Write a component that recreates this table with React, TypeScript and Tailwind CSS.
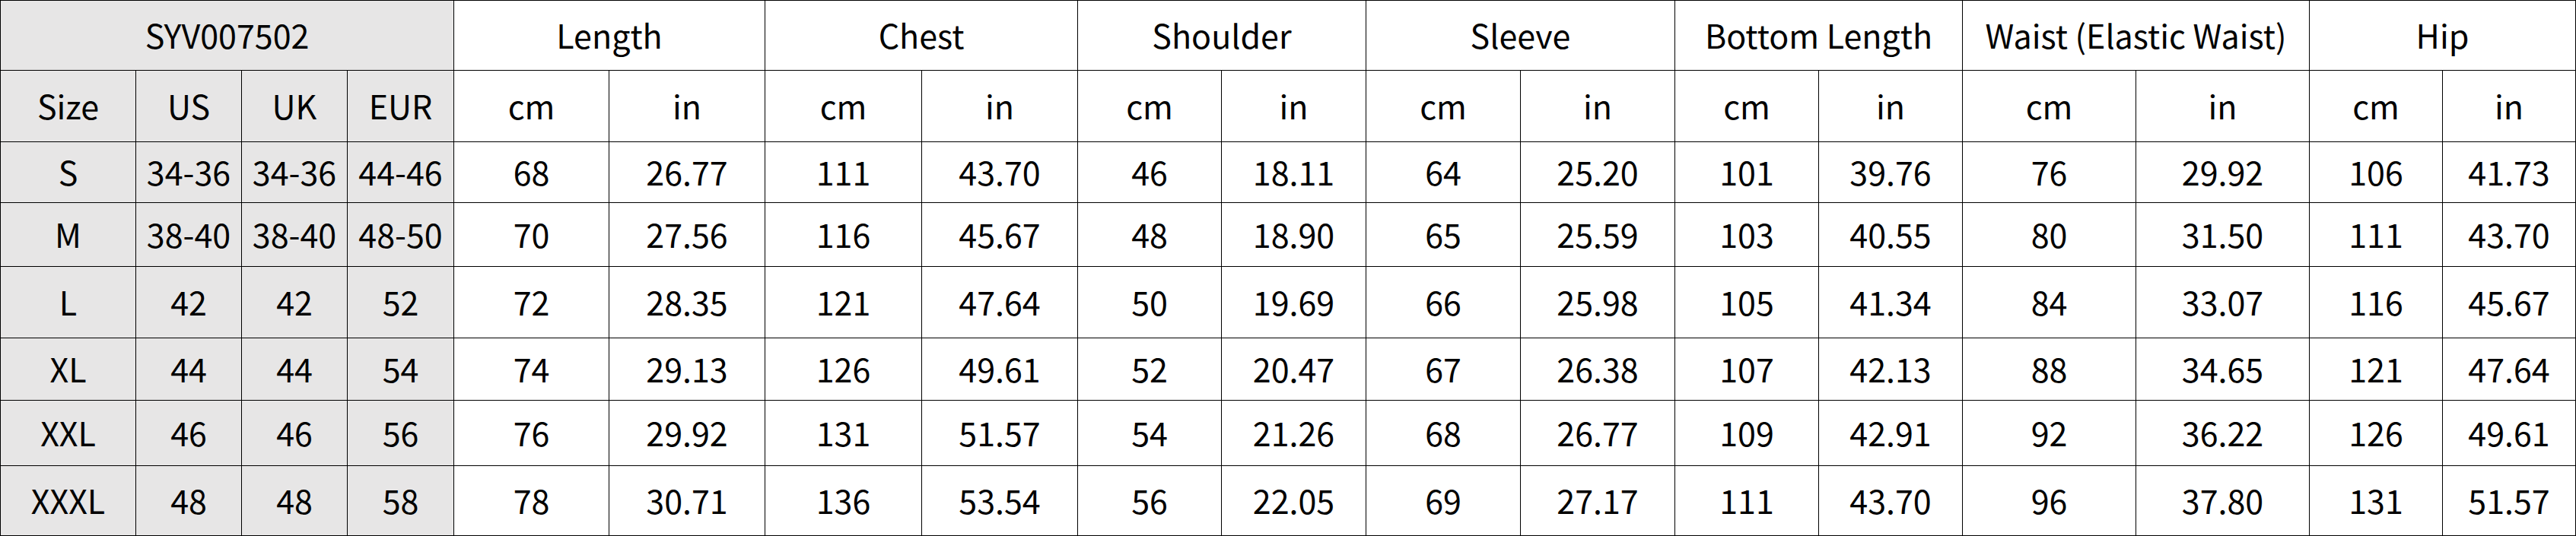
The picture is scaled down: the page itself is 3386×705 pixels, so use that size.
import * as React from "react"

const measures = ["Length", "Chest", "Shoulder", "Sleeve", "Bottom Length", "Waist (Elastic Waist)", "Hip"]

const rows: string[][] = [
  ["S", "34-36", "34-36", "44-46", "68", "26.77", "111", "43.70", "46", "18.11", "64", "25.20", "101", "39.76", "76", "29.92", "106", "41.73"],
  ["M", "38-40", "38-40", "48-50", "70", "27.56", "116", "45.67", "48", "18.90", "65", "25.59", "103", "40.55", "80", "31.50", "111", "43.70"],
  ["L", "42", "42", "52", "72", "28.35", "121", "47.64", "50", "19.69", "66", "25.98", "105", "41.34", "84", "33.07", "116", "45.67"],
  ["XL", "44", "44", "54", "74", "29.13", "126", "49.61", "52", "20.47", "67", "26.38", "107", "42.13", "88", "34.65", "121", "47.64"],
  ["XXL", "46", "46", "56", "76", "29.92", "131", "51.57", "54", "21.26", "68", "26.77", "109", "42.91", "92", "36.22", "126", "49.61"],
  ["XXXL", "48", "48", "58", "78", "30.71", "136", "53.54", "56", "22.05", "69", "27.17", "111", "43.70", "96", "37.80", "131", "51.57"],
]

const cell = "flex items-center justify-center pb-[3px] bg-white"
const gray = "flex items-center justify-center pb-[3px] bg-[#e7e6e6]"

export default function App() {
  return (
    <div
      className="w-[3386px] h-[705px] bg-white text-black text-[43px] leading-none"
      style={{ fontFamily: '"Noto Sans CJK SC", "Noto Sans", sans-serif' }}
    >
      <div className="grid grid-cols-[177px_138px_138px_139px_203px_204px_205px_204px_188px_189px_202px_202px_188px_188px_227px_227px_174px_174px] grid-rows-[91px_93px_79px_83px_93px_81px_85px_91px] gap-px p-px bg-black">
        {/* title + measurement names */}
        <div className={`${gray} col-span-4`}>SYV007502</div>
        {measures.map((m) => (
          <div key={m} className={`${cell} col-span-2`}>{m}</div>
        ))}

        {/* unit row */}
        {["Size", "US", "UK", "EUR"].map((h) => (
          <div key={h} className={gray}>{h}</div>
        ))}
        {measures.map((m) => (
          <React.Fragment key={m}>
            <div className={cell}>cm</div>
            <div className={cell}>in</div>
          </React.Fragment>
        ))}

        {/* sizes */}
        {rows.map((r) =>
          r.map((v, i) => (
            <div key={r[0] + i} className={i < 4 ? gray : cell}>{v}</div>
          ))
        )}
      </div>
    </div>
  )
}
